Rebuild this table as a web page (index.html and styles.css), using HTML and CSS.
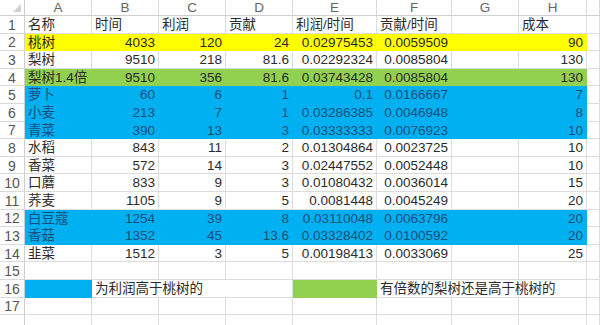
FILE: index.html
```html
<!DOCTYPE html>
<html lang="zh">
<head>
<meta charset="utf-8">
<link rel="stylesheet" href="styles.css">
</head>
<body>
<div class="sheet">
  <div class="corner"><svg width="10" height="10" viewBox="0 0 10 10"><polygon points="9,1 9,9 1,9" fill="#d0d0d0"/></svg></div>
  <div class="ch">A</div><div class="ch">B</div><div class="ch">C</div><div class="ch">D</div><div class="ch">E</div><div class="ch">F</div><div class="ch">G</div><div class="ch">H</div><div class="ch"></div>

  <div class="rh">1</div>
  <div class="c">名称</div><div class="c">时间</div><div class="c">利润</div><div class="c">贡献</div><div class="c">利润/时间</div><div class="c">贡献/时间</div><div class="c"></div><div class="c">成本</div><div class="c"></div>

  <div class="rh">2</div>
  <div class="c y">桃树</div><div class="c n y">4033</div><div class="c n y">120</div><div class="c n y">24</div><div class="c n y">0.02975453</div><div class="c n y">0.0059509</div><div class="c y"></div><div class="c n y">90</div><div class="c"></div>

  <div class="rh">3</div>
  <div class="c">梨树</div><div class="c n">9510</div><div class="c n">218</div><div class="c n">81.6</div><div class="c n">0.02292324</div><div class="c n">0.0085804</div><div class="c"></div><div class="c n">130</div><div class="c"></div>

  <div class="rh">4</div>
  <div class="c g">梨树1.4倍</div><div class="c n g">9510</div><div class="c n g">356</div><div class="c n g">81.6</div><div class="c n g">0.03743428</div><div class="c n g">0.0085804</div><div class="c g"></div><div class="c n g">130</div><div class="c"></div>

  <div class="rh">5</div>
  <div class="c b">萝卜</div><div class="c n b">60</div><div class="c n b">6</div><div class="c n b">1</div><div class="c n b">0.1</div><div class="c n b">0.0166667</div><div class="c b"></div><div class="c n b">7</div><div class="c"></div>

  <div class="rh">6</div>
  <div class="c b">小麦</div><div class="c n b">213</div><div class="c n b">7</div><div class="c n b">1</div><div class="c n b">0.03286385</div><div class="c n b">0.0046948</div><div class="c b"></div><div class="c n b">8</div><div class="c"></div>

  <div class="rh">7</div>
  <div class="c b">青菜</div><div class="c n b">390</div><div class="c n b">13</div><div class="c n b">3</div><div class="c n b">0.03333333</div><div class="c n b">0.0076923</div><div class="c b"></div><div class="c n b">10</div><div class="c"></div>

  <div class="rh">8</div>
  <div class="c">水稻</div><div class="c n">843</div><div class="c n">11</div><div class="c n">2</div><div class="c n">0.01304864</div><div class="c n">0.0023725</div><div class="c"></div><div class="c n">10</div><div class="c"></div>

  <div class="rh">9</div>
  <div class="c">香菜</div><div class="c n">572</div><div class="c n">14</div><div class="c n">3</div><div class="c n">0.02447552</div><div class="c n">0.0052448</div><div class="c"></div><div class="c n">10</div><div class="c"></div>

  <div class="rh">10</div>
  <div class="c">口蘑</div><div class="c n">833</div><div class="c n">9</div><div class="c n">3</div><div class="c n">0.01080432</div><div class="c n">0.0036014</div><div class="c"></div><div class="c n">15</div><div class="c"></div>

  <div class="rh">11</div>
  <div class="c">荞麦</div><div class="c n">1105</div><div class="c n">9</div><div class="c n">5</div><div class="c n">0.0081448</div><div class="c n">0.0045249</div><div class="c"></div><div class="c n">20</div><div class="c"></div>

  <div class="rh">12</div>
  <div class="c b">白豆蔻</div><div class="c n b">1254</div><div class="c n b">39</div><div class="c n b">8</div><div class="c n b">0.03110048</div><div class="c n b">0.0063796</div><div class="c b"></div><div class="c n b">20</div><div class="c"></div>

  <div class="rh">13</div>
  <div class="c b">香菇</div><div class="c n b">1352</div><div class="c n b">45</div><div class="c n b">13.6</div><div class="c n b">0.03328402</div><div class="c n b">0.0100592</div><div class="c b"></div><div class="c n b">20</div><div class="c"></div>

  <div class="rh">14</div>
  <div class="c">韭菜</div><div class="c n">1512</div><div class="c n">3</div><div class="c n">5</div><div class="c n">0.00198413</div><div class="c n">0.0033069</div><div class="c"></div><div class="c n">25</div><div class="c"></div>

  <div class="rh">15</div>
  <div class="c"></div><div class="c"></div><div class="c"></div><div class="c"></div><div class="c"></div><div class="c"></div><div class="c"></div><div class="c"></div><div class="c"></div>

  <div class="rh">16</div>
  <div class="c b"></div><div class="c span3">为利润高于桃树的</div><div class="c g"></div><div class="c span3">有倍数的梨树还是高于桃树的</div><div class="c"></div>

  <div class="rh">17</div>
  <div class="c"></div><div class="c"></div><div class="c"></div><div class="c"></div><div class="c"></div><div class="c"></div><div class="c"></div><div class="c"></div><div class="c"></div>

  <div class="rh last"></div>
  <div class="c"></div><div class="c"></div><div class="c"></div><div class="c"></div><div class="c"></div><div class="c"></div><div class="c"></div><div class="c"></div><div class="c"></div>
</div>
</body>
</html>
```

FILE: styles.css
```css
html, body {
  margin: 0;
  padding: 0;
  background: #ffffff;
  overflow: hidden;
}

.sheet {
  display: grid;
  grid-template-columns: 25px 67px 67px 67px 67px 84px 75px 67px 68px 1fr;
  grid-template-rows: 16px repeat(18, 17.6px);
  width: 600px;
  font-family: "Liberation Sans", "Noto Sans CJK SC", sans-serif;
  font-size: 13.5px;
  color: #2b2b2b;
}

.corner {
  box-sizing: border-box;
  border-right: 1px solid #cfcfcf;
  border-bottom: 1px solid #cfcfcf;
  display: flex;
  align-items: flex-end;
  justify-content: flex-end;
  padding: 0 2px 2px 0;
}

.corner svg {
  display: block;
}

.ch {
  box-sizing: border-box;
  border-right: 1px solid #dadada;
  border-bottom: 1px solid #cfcfcf;
  display: flex;
  align-items: center;
  justify-content: center;
  font-size: 13.5px;
  color: #666;
  line-height: 1;
}

.rh {
  box-sizing: border-box;
  border-right: 1px solid #cfcfcf;
  border-bottom: 1px solid #dadada;
  display: flex;
  align-items: center;
  justify-content: center;
  font-size: 14px;
  color: #555;
  line-height: 1;
  padding-top: 1px;
}

.c {
  box-sizing: border-box;
  border-right: 1px solid #dcdcdc;
  border-bottom: 1px solid #dcdcdc;
  display: flex;
  align-items: center;
  padding: 1px 3px 0 3px;
  white-space: nowrap;
  overflow: hidden;
  line-height: 1;
}

.n {
  justify-content: flex-end;
}

.y {
  background: #ffff00;
  border-color: #ffff00;
}

.g {
  background: #92d050;
  border-color: #92d050;
}

.b {
  background: #00b0f0;
  border-color: #00b0f0;
  color: #1a4f7d;
}

.span3 {
  grid-column: span 3;
}
```
